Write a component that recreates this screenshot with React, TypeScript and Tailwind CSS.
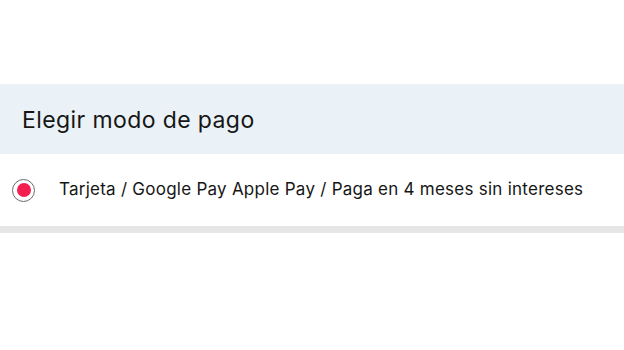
export default function App() {
  return (
    <div className="w-[624px] h-[350px] bg-white font-['Inter','Liberation_Sans',sans-serif] text-[#161616]">
      <div className="h-[84px]" />
      <section>
        <div className="h-[70px] bg-[#ebf2f7] flex items-center px-[22px]">
          <h2 className="text-[23px] font-normal tracking-[0.4px] pt-[2px]">Elegir modo de pago</h2>
        </div>
        <label className="h-[72px] flex items-center gap-[24px] pl-[12px]">
          <span className="w-[23px] h-[23px] rounded-full border-[1.5px] border-[#6b6b6b] flex items-center justify-center">
            <span className="w-[14px] h-[14px] rounded-full bg-[#f21f4f]" />
          </span>
          <span className="text-[17px] tracking-[0.25px]">Tarjeta / Google Pay Apple Pay / Paga en 4 meses sin intereses</span>
        </label>
        <div className="h-[7px] bg-[#e6e6e6]" />
      </section>
    </div>
  );
}
